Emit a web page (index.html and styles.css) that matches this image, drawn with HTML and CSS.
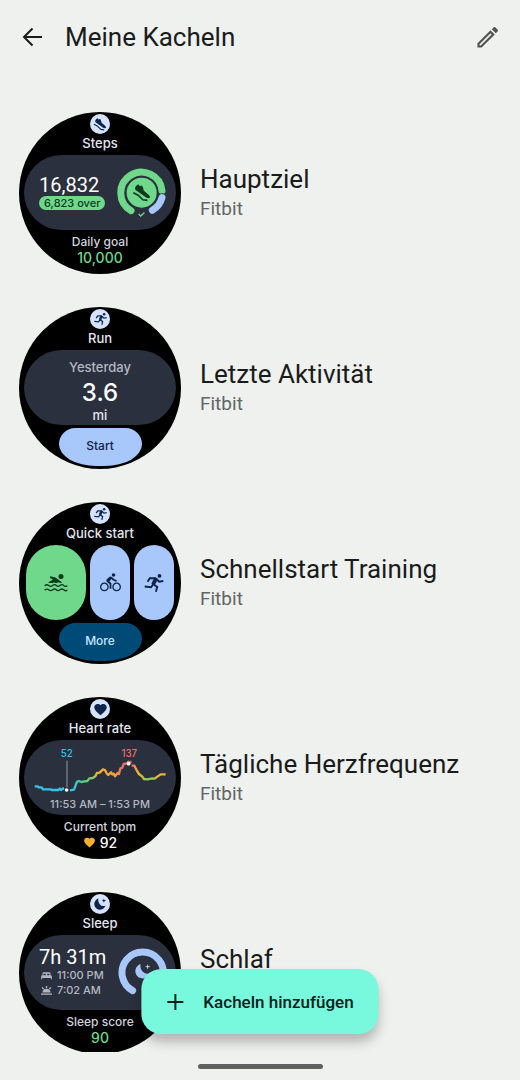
FILE: index.html
```
<!DOCTYPE html>
<html lang="de">
<head>
<meta charset="utf-8">
<meta name="viewport" content="width=device-width, initial-scale=1">
<title>Meine Kacheln</title>
<link rel="stylesheet" href="styles.css">
</head>
<body>
<svg class="sprite" aria-hidden="true">
  <symbol id="run" viewBox="0 0 60 56">
    <circle cx="47" cy="6" r="6" fill="currentColor"/>
    <g fill="none" stroke="currentColor" stroke-width="6">
      <path d="M10 24l7-11 17 0 6 5 6 6 13-2M28 32l12 8-4 15M28 31l-7 10-20-2"/>
      <path stroke-width="12" d="M37 13l-10 19"/>
    </g>
  </symbol>
  <symbol id="bike" viewBox="0 0 24 24"><path fill="currentColor" d="M15.500 5.500c1.100 0 2-.9 2-2s-.9-2-2-2-2 .9-2 2 .9 2 2 2zM5 12c-2.800 0-5 2.200-5 5s2.200 5 5 5 5-2.200 5-5-2.200-5-5-5zm0 8.500c-1.900 0-3.500-1.600-3.500-3.500s1.600-3.500 3.500-3.500 3.500 1.600 3.500 3.500-1.600 3.500-3.500 3.500zm5.800-10l2.400-2.400.8.8c1.300 1.300 3 2.100 5.100 2.100V9c-1.500 0-2.700-.6-3.600-1.500l-1.900-1.900c-.5-.4-1-.6-1.600-.6s-1.100.2-1.400.6L7.800 8.400c-.4.4-.6.9-.6 1.400 0 .6.2 1.100.6 1.400L11 14v5h2v-6.200l-2.200-2.300zM19 12c-2.800 0-5 2.200-5 5s2.200 5 5 5 5-2.200 5-5-2.200-5-5-5zm0 8.500c-1.900 0-3.500-1.600-3.500-3.500s1.600-3.500 3.500-3.500 3.500 1.600 3.500 3.500-1.600 3.500-3.500 3.500z"/></symbol>
  <symbol id="swim" viewBox="0 0 72 56">
    <circle cx="51" cy="10" r="7.500" fill="currentColor"/>
    <path fill="currentColor" d="M12 28L27 19 17 14l2-5 15 4 21 15q-6 2-11-1-8 4-14 1-7 3-18 0z"/>
    <path fill="none" stroke="currentColor" stroke-width="4" d="M2 38q6-6 12-1t12 0 11 0 11 0 11 0 11 1M2 51q6-6 12-1t12 0 11 0 11 0 11 0 11 1"/>
  </symbol>
  <symbol id="shoe" viewBox="0 0 60 60">
    <path fill="currentColor" d="M11 13q5-8 10-7l3 5 7-2 4 8 1 7 17 15q6 6 0 9l-8-1L11 23q-4-4 0-10z"/>
    <path fill="none" stroke="currentColor" stroke-width="5" d="M4 31l14 7 16 15 14 2"/>
  </symbol>
  <symbol id="heart" viewBox="0 0 24 24"><path fill="currentColor" d="M12 21.350l-1.450-1.320C5.400 15.360 2 12.280 2 8.500 2 5.420 4.420 3 7.500 3c1.740 0 3.410.81 4.500 2.090C13.090 3.810 14.760 3 16.500 3 19.580 3 22 5.420 22 8.500c0 3.780-3.400 6.860-8.550 11.540L12 21.350z"/></symbol>
  <symbol id="moon" viewBox="0 0 54 54">
    <path fill="currentColor" d="M21 6a22 22 0 1 0 27 28q-14 4-22-6T21 6zM42 5l2 7 7 2-7 2-2 7-2-7-7-2 7-2z"/>
  </symbol>
  <symbol id="bed" viewBox="0 0 32 24"><path fill="currentColor" d="M4 10V4q0-3 3-3h18q3 0 3 3v6q4 0 4 4v8h-3v-4H3v4H0v-8q0-4 4-4zm3 0h7V5H7zm11 0h7V5h-7z"/></symbol>
  <symbol id="sun" viewBox="0 0 32 26"><path fill="currentColor" d="M0 22h32v3H0zM4 19h24q-1-11-12-11T4 19zM14 0h4v6h-4zM2 6l3-3 4 4-3 3zm28 0l-3-3-4 4 3 3z"/></symbol>
</svg>

<header class="bar">
  <button class="icon-button" type="button" aria-label="Zurück">
    <svg width="24" height="24" viewBox="0 0 24 24" fill="none" stroke="currentColor" stroke-width="2"><path d="M22 12H4M12.500 3.500L4 12l8.500 8.500"/></svg>
  </button>
  <h1 class="bar-title">Meine Kacheln</h1>
  <button class="icon-button edit" type="button" aria-label="Bearbeiten">
    <svg width="24" height="24" viewBox="0 0 24 24"><path fill="none" stroke="currentColor" stroke-width="2.200" d="M2.500 18.800L14.500 6.800l2.700 2.700-12 12H2.500z"/><path fill="currentColor" d="M15.800 4.200l1.900-1.900q.8-.8 1.600 0l2.400 2.400q.8.8 0 1.600l-1.900 1.900z"/></svg>
  </button>
</header>

<main class="content">
  <ul class="tiles">
    <li class="tile">
      <div class="watch">
        <span class="badge"><svg width="14" height="14"><use href="#shoe"/></svg></span>
        <span class="watch-name">Steps</span>
        <div class="panel split">
          <div class="stats">
            <span class="value">16,832</span>
            <span class="chip">6,823 over</span>
          </div>
          <svg class="ring" width="53" height="52" viewBox="315 185 159 156" fill="none" stroke-width="21" stroke-linecap="round">
            <path stroke="#6fd88b" d="M363 316A62 62 0 1 1 456 256"/>
            <path stroke="#2a303d" stroke-width="27" d="M456 277A62 62 0 0 1 427 315"/>
            <path stroke="#a8c7fa" d="M456 277A62 62 0 0 1 427 315"/>
            <circle cx="395" cy="262" r="45" fill="#6fd88b"/>
            <svg x="366" y="232" width="58" height="58" color="#0c3a1c"><use href="#shoe" stroke-linecap="butt"/></svg>
            <path stroke="#6fd88b" stroke-width="4" d="M387 327l5 5 10-9"/>
          </svg>
        </div>
        <span class="caption">Daily goal</span>
        <span class="result green">10,000</span>
      </div>
      <div class="label"><h2 class="name">Hauptziel</h2><p class="source">Fitbit</p></div>
    </li>

    <li class="tile">
      <div class="watch">
        <span class="badge"><svg width="13" height="12"><use href="#run"/></svg></span>
        <span class="watch-name">Run</span>
        <div class="panel stack">
          <span class="day">Yesterday</span>
          <span class="distance">3.6</span>
          <span class="unit">mi</span>
        </div>
        <span class="action">Start</span>
      </div>
      <div class="label"><h2 class="name">Letzte Aktivität</h2><p class="source">Fitbit</p></div>
    </li>

    <li class="tile">
      <div class="watch">
        <span class="badge"><svg width="13" height="12"><use href="#run"/></svg></span>
        <span class="watch-name">Quick start</span>
        <div class="sports">
          <span class="sport swim"><svg width="24" height="19"><use href="#swim"/></svg></span>
          <span class="sport"><svg width="21" height="21"><use href="#bike"/></svg></span>
          <span class="sport"><svg width="20" height="18"><use href="#run"/></svg></span>
        </div>
        <span class="action more">More</span>
      </div>
      <div class="label"><h2 class="name">Schnellstart Training</h2><p class="source">Fitbit</p></div>
    </li>

    <li class="tile">
      <div class="watch">
        <span class="badge"><svg width="15" height="15"><use href="#heart"/></svg></span>
        <span class="watch-name">Heart rate</span>
        <div class="panel chart">
          <svg width="152" height="56" viewBox="42 150 456 168">
            <defs>
              <linearGradient id="pulse" gradientUnits="userSpaceOnUse" x1="75" y1="0" x2="467" y2="0">
                <stop offset="0" stop-color="#35c3e8"/><stop offset=".3" stop-color="#35c3e8"/><stop offset=".35" stop-color="#4fce8d"/><stop offset=".43" stop-color="#6fd06c"/><stop offset=".48" stop-color="#f2b233"/><stop offset=".62" stop-color="#f0a23c"/><stop offset=".66" stop-color="#e8706a"/><stop offset=".74" stop-color="#e8706a"/><stop offset=".79" stop-color="#f2b233"/><stop offset=".84" stop-color="#a5c83c"/><stop offset=".88" stop-color="#7fd060"/><stop offset=".94" stop-color="#f2b233"/><stop offset="1" stop-color="#f2b233"/>
              </linearGradient>
            </defs>
            <path stroke="#a9adb8" stroke-width="2.500" d="M171 212v80"/>
            <path fill="none" stroke="url(#pulse)" stroke-width="7" stroke-linejoin="round" d="M74 289h9l3 3h9l4 6h23l3 2h20l4-4 4 4 6-5v5M180 301l12-2 8-22 6-4 8 3 10-2 8-1 6-8 10-1 8-5 5-10 8-1 10-10 6 2 5 10 5 5 8-8 4 6 4-2 4 8 8-10 4 3 4-16 6-3 4-11 10-2 4-5 4 4 5-5M365 227h8l8 16 6 9 10 8 5 7 12 1 12-3 8 1 8-6 10-7h15"/>
            <circle cx="170" cy="300" r="5.500" fill="#fff"/><circle cx="356" cy="221" r="5.500" fill="#fff"/>
            <text class="mark" x="170" y="202" fill="#35c3e8">52</text>
            <text class="mark" x="358" y="202" fill="#e8706a">137</text>
          </svg>
          <span class="period">11:53 AM – 1:53 PM</span>
        </div>
        <span class="caption">Current bpm</span>
        <span class="result"><svg width="13" height="13" color="#fbb02d"><use href="#heart"/></svg>92</span>
      </div>
      <div class="label"><h2 class="name">Tägliche Herzfrequenz</h2><p class="source">Fitbit</p></div>
    </li>

    <li class="tile">
      <div class="watch">
        <span class="badge"><svg width="14" height="14"><use href="#moon"/></svg></span>
        <span class="watch-name">Sleep</span>
        <div class="panel split">
          <div class="stats">
            <span class="value">7h 31m</span>
            <span class="time"><svg width="11" height="8"><use href="#bed"/></svg>11:00 PM</span>
            <span class="time"><svg width="11" height="9"><use href="#sun"/></svg>7:02 AM</span>
          </div>
          <svg class="ring" width="53" height="52" viewBox="315 185 159 156" fill="none" stroke-width="21" stroke-linecap="round">
            <path stroke="#a8c7fa" d="M368 316A62 62 0 1 1 428 316"/>
            <svg x="371" y="230" width="54" height="54" color="#a8c7fa"><use href="#moon" stroke="none"/></svg>
          </svg>
        </div>
        <span class="caption">Sleep score</span>
        <span class="result green">90</span>
      </div>
      <div class="label"><h2 class="name">Schlaf</h2><p class="source">Fitbit</p></div>
    </li>
  </ul>
</main>

<button class="fab" type="button">
  <svg width="18" height="18" viewBox="0 0 18 18" stroke="currentColor" stroke-width="2"><path d="M9 1v16M1 9h16"/></svg>
  Kacheln hinzufügen
</button>
<footer class="system"><span class="handle"></span></footer>
</body>
</html>
```
FILE: styles.css
```
* { box-sizing: border-box; }
body {
  margin: 0;
  height: 100vh;
  display: flex;
  flex-direction: column;
  position: relative;
  overflow: hidden;
  background: #eff1ee;
  color: #191c1b;
  font-family: Roboto, "Liberation Sans", sans-serif;
}
h1, h2, p, ul { margin: 0; padding: 0; font-weight: 400; }
svg { display: block; flex: none; }
.sprite { position: absolute; width: 0; height: 0; }

.bar {
  display: flex;
  align-items: center;
  height: 74px;
  padding: 0 20px;
}
.icon-button {
  display: flex;
  padding: 0;
  border: 0;
  background: none;
  color: #191c1b;
}
.edit { color: #505553; }
.bar-title { flex: 1; margin-left: 21px; font-size: 26px; line-height: 32px; }

.content { flex: 1; min-height: 0; overflow: hidden; padding: 38px 19px 0; }
.tiles { display: flex; flex-direction: column; gap: 33px; list-style: none; }
.tile { display: flex; align-items: center; gap: 19px; }
.name { font-size: 26px; line-height: 32px; }
.source { font-size: 19px; line-height: 28px; color: #616664; }

.watch {
  display: flex;
  flex-direction: column;
  align-items: center;
  flex: none;
  width: 162px;
  height: 162px;
  padding: 2px 5px;
  border-radius: 50%;
  overflow: hidden;
  background: #000;
  color: #e3e6f0;
  font-family: Inter, "Liberation Sans", sans-serif;
  font-weight: 500;
}
.badge {
  display: flex;
  align-items: center;
  justify-content: center;
  width: 20px;
  height: 20px;
  border-radius: 50%;
  background: #d6e3ff;
  color: #0d254c;
}
.watch-name { height: 21px; font-size: 13px; line-height: 18px; }
.panel {
  width: 100%;
  height: 75px;
  border-radius: 38px;
  overflow: hidden;
  background: #2a303d;
}
.split { display: flex; align-items: center; justify-content: space-between; padding: 0 8px 0 15px; }
.stats { display: flex; flex-direction: column; align-items: flex-start; white-space: nowrap; }
.value { font-family: Roboto, sans-serif; font-weight: 400; font-size: 20px; line-height: 21px; color: #fff; }
.chip {
  padding: 0 5px;
  border-radius: 7px;
  background: #6fd88b;
  color: #0c3a1c;
  font-size: 11px;
  line-height: 14px;
}
.time { display: flex; align-items: center; gap: 5px; padding-left: 2px; font-size: 11px; line-height: 15px; color: #b4b8c2; }
.stack, .chart { display: flex; flex-direction: column; align-items: center; }
.day { padding-top: 8px; font-size: 13px; line-height: 18px; color: #b4b8c2; }
.distance { font-size: 24px; line-height: 34px; color: #fff; }
.unit { font-size: 13px; line-height: 11px; }
.mark { font-size: 29px; text-anchor: middle; }
.period { font-size: 11px; line-height: 16px; color: #b4b8c2; }
.caption { padding-top: 4px; font-size: 12px; line-height: 16px; color: #d0d3dc; }
.result { display: flex; align-items: center; gap: 4px; font-size: 14px; line-height: 15px; color: #fff; }
.green { color: #6fd88b; }
.action {
  width: 83px;
  height: 38px;
  margin-top: 3px;
  border-radius: 18px 18px 41px 41px / 18px 18px 24px 24px;
  background: #a8c7fa;
  color: #0d254c;
  font-size: 12px;
  line-height: 36px;
  text-align: center;
}
.more { background: #004a77; color: #c2e7ff; }
.sports { display: flex; gap: 4px; width: 100%; height: 75px; padding: 0 2px; }
.sport {
  display: flex;
  align-items: center;
  justify-content: center;
  flex: 2;
  border-radius: 20px;
  background: #a8c7fa;
  color: #0d254c;
}
.swim { flex: 3; border-radius: 30px; background: #6fd88b; color: #0c3a1c; }

.fab {
  position: absolute;
  bottom: 46px;
  left: 50%;
  transform: translateX(-50%);
  display: flex;
  align-items: center;
  gap: 19px;
  height: 65px;
  padding: 0 25px;
  border: 0;
  border-radius: 20px;
  background: #78f9dd;
  color: #06201b;
  box-shadow: 0 8px 12px rgba(0, 0, 0, .25);
  font: 500 17px/24px Roboto, "Liberation Sans", sans-serif;
  white-space: nowrap;
}
.system { display: flex; justify-content: center; align-items: center; height: 28px; }
.handle { width: 125px; height: 5px; border-radius: 3px; background: #5f6160; }
```
